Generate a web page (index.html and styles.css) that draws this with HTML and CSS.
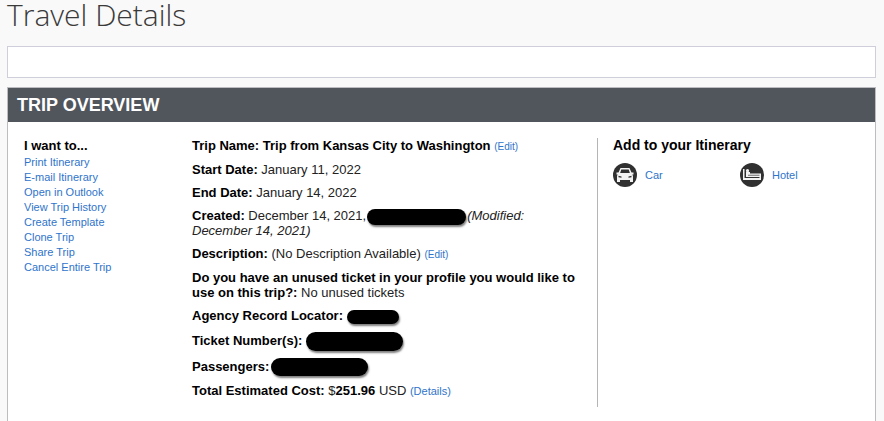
FILE: index.html
```html
<!DOCTYPE html>
<html lang="en">
  <head>
    <meta charset="UTF-8" />
    <meta name="viewport" content="width=device-width, initial-scale=1.0" />
    <title>Travel Details</title>
    <link rel="stylesheet" href="styles.css">
  </head>
  <body>
    <h1>Travel Details</h1>

    <div class="message-bar"></div>

    <section class="trip">
      <h2>TRIP OVERVIEW</h2>
      <div class="trip-body">
        <!-- Actions -->
        <nav class="actions">
          <h3>I want to...</h3>
          <ul>
            <li><a href="#">Print Itinerary</a></li>
            <li><a href="#">E-mail Itinerary</a></li>
            <li><a href="#">Open in Outlook</a></li>
            <li><a href="#">View Trip History</a></li>
            <li><a href="#">Create Template</a></li>
            <li><a href="#">Clone Trip</a></li>
            <li><a href="#">Share Trip</a></li>
            <li><a href="#">Cancel Entire Trip</a></li>
          </ul>
        </nav>

        <!-- Trip details -->
        <div class="details">
          <p><b>Trip Name: Trip from Kansas City to Washington</b> <a href="#" class="edit">(Edit)</a></p>
          <p><b>Start Date:</b> January 11, 2022</p>
          <p><b>End Date:</b> January 14, 2022</p>
          <p><b>Created:</b> December 14, 2021,<span class="redacted creator"></span><i>(Modified: December 14, 2021)</i></p>
          <p><b>Description:</b> (No Description Available) <a href="#" class="edit">(Edit)</a></p>
          <p><b>Do you have an unused ticket in your profile you would like to use on this trip?:</b> No unused tickets</p>
          <p><b>Agency Record Locator:</b> <span class="redacted locator"></span></p>
          <p><b>Ticket Number(s):</b> <span class="redacted ticket"></span></p>
          <p><b>Passengers:</b><span class="redacted passenger"></span></p>
          <p><b>Total Estimated Cost:</b> $<b>251.96</b> USD <a href="#">(Details)</a></p>
        </div>

        <!-- Add to itinerary -->
        <div class="add">
          <h3>Add to your Itinerary</h3>
          <div class="add-links">
            <a href="#">
              <svg class="icon" viewBox="0 0 24 24">
                <circle cx="12" cy="12" r="12" fill="#303030" />
                <path d="M7.500 5h9l2 4.500h2v2h-1.200l.7 1.500v6h-3v-2H7v2H4v-6l.7-1.500H3.500v-2h2z" fill="#f2f2f2" />
                <path d="M8.300 6.500h7.400l1.200 3.500H7.100z" fill="#303030" />
                <path d="M5.500 12.700l3 .7v1.300l-3-.4zM18.500 12.700l-3 .7v1.300l3-.4z" fill="#303030" />
              </svg>
              <span>Car</span>
            </a>
            <a href="#">
              <svg class="icon" viewBox="0 0 24 24">
                <circle cx="12" cy="12" r="12" fill="#303030" />
                <path d="M3 6h1.500v9H21v2H3z" fill="#f2f2f2" />
                <path d="M6 9h4v1.500h11V14H6z" fill="#f2f2f2" />
                <path d="M8 11.700h11.500v1.100H8z" fill="#777" />
                <circle cx="7.500" cy="7.700" r="1.600" fill="#f2f2f2" />
                <path d="M19.500 14H21v3h-1.500z" fill="#f2f2f2" />
              </svg>
              <span>Hotel</span>
            </a>
          </div>
        </div>
      </div>
    </section>
  </body>
</html>
```
FILE: styles.css
```css
:root {
  --link: #2f74cb;
  --bar: #51565d;
  --border: #cfcfdb;
}

* {
  margin: 0;
  padding: 0;
  box-sizing: border-box;
}

body {
  background-color: #f9f9f9;
  color: #222;
  font-family: "Liberation Sans", Arial, sans-serif;
  font-size: 13px;
  line-height: 15px;
  padding: 0 8px 0 7px;
}

a {
  color: var(--link);
  font-size: 11px;
  text-decoration: none;
}

a:hover {
  text-decoration: underline;
}

b,
h3 {
  color: #000;
}

h1 {
  color: #3a3a3a;
  font-family: "Open Sans", sans-serif;
  font-size: 30px;
  font-weight: 300;
  line-height: 30px;
  margin-bottom: 16px;
}

.message-bar {
  height: 32px;
  background: #fff;
  border: 1px solid var(--border);
  margin-bottom: 9px;
}

.trip {
  min-height: calc(100vh - 87px);
  background: #fff;
  border: 1px solid #bdbdc1;
  border-bottom: none;
}

h2 {
  background: var(--bar);
  color: #fff;
  font-size: 18px;
  line-height: 34px;
  padding-left: 9px;
}

.trip-body {
  display: grid;
  grid-template-columns: 168px 3fr 2fr;
  padding: 16px 8px 15px 16px;
}

h3 {
  font-size: 13px;
  line-height: 15px;
  margin-bottom: 1px;
}

.actions ul {
  list-style: none;
}

.actions li {
  height: 15px;
}

.details {
  display: flex;
  flex-direction: column;
  gap: 8px;
  padding: 0 16px 8px 0;
}

.details .edit {
  font-size: 10px;
}

/* Blacked out personal data */
.redacted {
  display: inline-block;
  vertical-align: middle;
  background: #000;
  border-radius: 10px;
  box-shadow: 1px 2px 2px rgba(0, 0, 0, 0.5);
}

.creator {
  width: 99px;
  height: 16px;
  margin: -2px 1px;
}

.locator {
  width: 52px;
  height: 14px;
}

.ticket {
  width: 97px;
  height: 19px;
}

.passenger {
  width: 97px;
  height: 18px;
  margin: -1px 0 -1px 2px;
}

.add {
  border-left: 1px solid #b5b5b5;
  padding-left: 15px;
}

.add h3 {
  font-size: 14px;
}

.add-links {
  display: grid;
  grid-template-columns: 1fr 1fr;
  margin-top: 10px;
}

.add-links a {
  display: flex;
  align-items: center;
  gap: 8px;
}

.icon {
  width: 24px;
  height: 24px;
}
```
